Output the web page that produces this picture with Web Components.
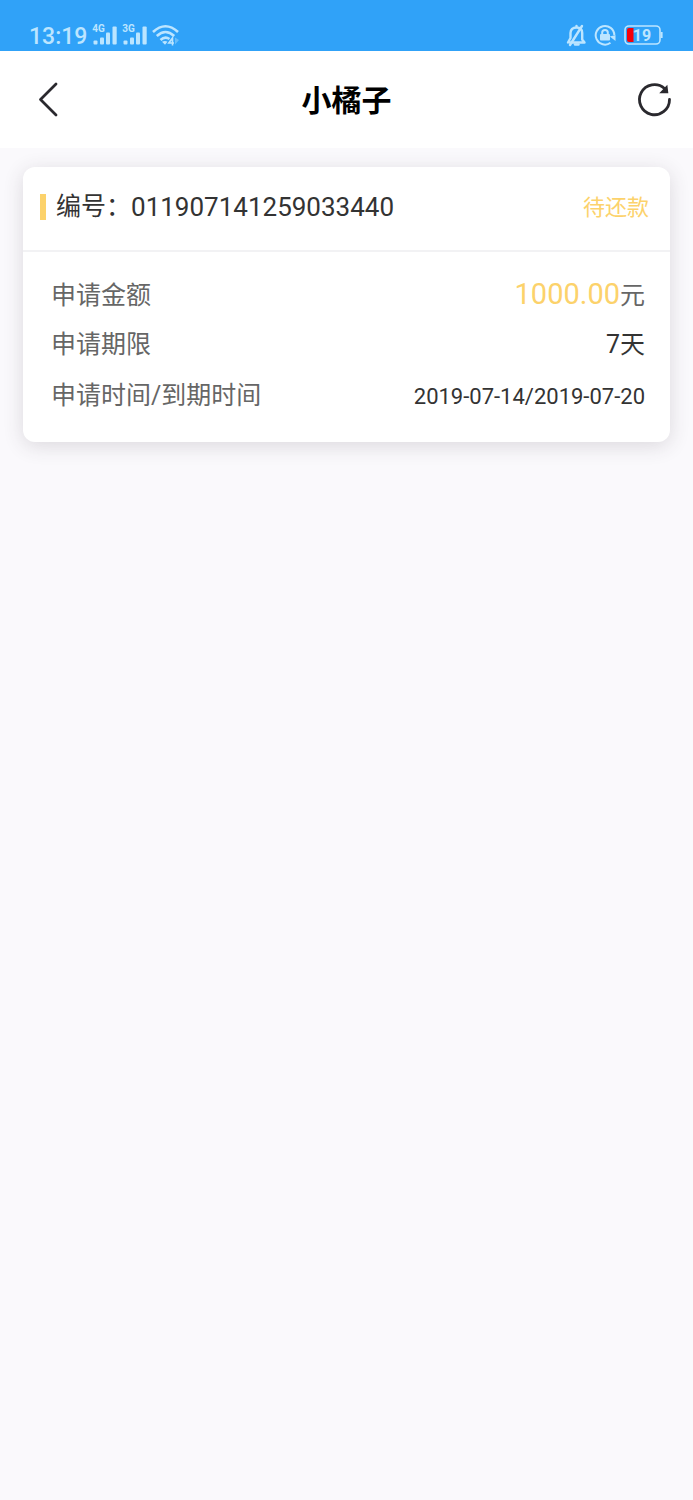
<!DOCTYPE html>
<html lang="zh-CN">
<head>
<meta charset="utf-8">
<meta name="viewport" content="width=device-width, initial-scale=1">
<title>小橘子</title>
<style>
  body {
    margin: 0;
    min-height: 100vh;
    background: #faf9fc;
    color: #333;
    font-family: Roboto, "Noto Sans CJK SC", sans-serif;
  }
</style>
</head>
<body>
<loan-page></loan-page>

<script>
const define = (name, html) => {
  const template = document.createElement('template');
  template.innerHTML = html;
  customElements.define(name, class extends HTMLElement {
    constructor() {
      super();
      this.attachShadow({ mode: 'open' }).append(template.content.cloneNode(true));
    }
  });
};

/* Mobile signal bars with the network generation above them */
define('signal-bars', `
  <style>
    :host { display: block; position: relative; width: 25px; height: 24px; }
    svg { display: block; }
    span { position: absolute; left: 0; top: 0; font-size: 10px; line-height: 12px; font-weight: 700; }
  </style>
  <svg width="25" height="24" viewBox="0 0 25 24" fill="currentColor" aria-hidden="true">
    <rect x="1.5" y="17.5" width="4" height="4" rx="1"/>
    <rect x="8" y="14.5" width="4" height="7" rx="1"/>
    <rect x="14" y="9.5" width="4" height="12" rx="1"/>
    <rect x="20.5" y="3.5" width="4.2" height="18" rx="1"/>
  </svg>
  <span><slot></slot></span>`);

define('battery-level', `
  <style>
    :host { display: block; position: relative; width: 39px; height: 20px; }
    svg { display: block; }
    span { position: absolute; inset: 1px 3px 0 0; text-align: center; font-size: 16px; line-height: 20px; font-weight: 700; }
  </style>
  <svg width="39" height="20" viewBox="0 0 39 20" fill="none" aria-hidden="true">
    <path d="M5 3H9.500V17H5Q3 17 3 15V5Q3 3 5 3Z" fill="#f80008"/>
    <rect x="1" y="1" width="35" height="18" rx="4" stroke="currentColor" stroke-width="1.6"/>
    <path d="M37.6 7V13" stroke="currentColor" stroke-width="2"/>
  </svg>
  <span><slot></slot></span>`);

define('status-bar', `
  <style>
    :host {
      display: flex; justify-content: space-between; align-items: flex-end;
      box-sizing: border-box; height: 51px; padding: 0 30px 2px 29px;
      background: #30a2f8; color: #bce5ff;
    }
    div { display: flex; align-items: center; height: 28px; }
    .left { gap: 5px; }
    .right { gap: 8px; }
    time { padding-top: 3px; font-size: 23px; line-height: 25px; font-weight: 500; }
    svg { display: block; }
  </style>
  <div class="left">
    <time>13:19</time>
    <signal-bars>4G</signal-bars>
    <signal-bars>3G</signal-bars>
    <svg width="28" height="24" viewBox="0 0 28 24" fill="none" stroke="currentColor" stroke-width="2.6" aria-label="Wi-Fi" role="img">
      <path d="M1 9Q13.5 -2.5 26 9"/>
      <path d="M4.800 13Q13.500 5 22.200 13"/>
      <path d="M8.500 17Q13 12.800 17.500 16"/>
      <path d="M10 18.800Q13 17 15.500 18.800L13 21.800Z" fill="currentColor" stroke="none"/>
      <path d="M20.500 22.500V15L16.800 20H22" stroke-width="1.600"/>
      <path d="M23 14.500V21.500L27 17Z" fill="currentColor" stroke="none" opacity=".4"/>
    </svg>
  </div>
  <div class="right">
    <svg width="20" height="24" viewBox="0 0 20 24" fill="none" stroke="currentColor" stroke-width="2.4" stroke-linecap="round" stroke-linejoin="round" aria-label="静音" role="img">
      <path d="M4 19.500H18.500L16.200 16.500V10Q16.200 4.500 10.500 4.500T4.500 10V15L2 19.500M10.500 3V4.500"/>
      <path d="M9 21.500H12.500"/>
      <path d="M4 22L16 3"/>
    </svg>
    <svg width="22" height="24" viewBox="0 0 22 24" fill="none" stroke="currentColor" stroke-width="2" aria-label="方向锁定" role="img">
      <path d="M16.500 19.800A9.300 9.300 0 1 1 20.300 12"/>
      <path d="M15.800 13.500L21.500 12V18Z" fill="currentColor" stroke="none"/>
      <rect x="6" y="11" width="10" height="6.500" rx="1" fill="currentColor" stroke="none"/>
      <path d="M8.200 11.500V9.500Q8.200 7 11 7T13.800 9.500V11.500"/>
    </svg>
    <battery-level>19</battery-level>
  </div>`);

define('nav-bar', `
  <style>
    :host {
      display: grid; grid-template-columns: 66px 1fr 66px; align-items: center;
      height: 97px; box-sizing: border-box; padding: 1px 15px 0; background: #fff;
    }
    h1 { margin: 0; padding-top: 2px; text-align: center; font-size: 30px; line-height: 44px; font-weight: 700; color: #000; }
    button { display: grid; place-items: center; justify-self: center; width: 48px; height: 48px; padding: 0; border: 0; background: none; color: #2a292e; }
    button:last-of-type { justify-self: end; }
    svg { display: block; }
  </style>
  <button type="button" aria-label="返回">
    <svg width="24" height="36" viewBox="0 0 24 36" fill="none" stroke="currentColor" stroke-width="2.8" stroke-linecap="round" stroke-linejoin="round">
      <path d="M20 2L4.500 17.500L20 33"/>
    </svg>
  </button>
  <h1><slot></slot></h1>
  <button type="button" aria-label="刷新">
    <svg width="36" height="36" viewBox="0 0 36 36" fill="none" stroke="currentColor" stroke-width="2.8">
      <path d="M33.5 17.5A15 15 0 1 1 28.5 6.5" stroke-linecap="round"/>
      <path d="M30.8 4.5L31.5 10.5H25Z" fill="currentColor" stroke-width="1.5"/>
    </svg>
  </button>`);

define('loan-card', `
  <style>
    :host { display: block; margin: 19px 23px 0; border-radius: 12px; background: #fff; box-shadow: 0 4px 20px rgba(60, 50, 60, .16); }
    header { display: flex; align-items: center; justify-content: space-between; height: 85px; box-sizing: border-box; padding: 0 21px 3px 17px; border-bottom: 2px solid #f2f2f4; }
    h2 { display: flex; align-items: center; margin: 0; font-size: 25px; line-height: 36px; font-weight: 400; }
    h2::before { content: ""; width: 6px; height: 26px; margin-right: 10px; background: #fcd26b; }
    .number { font-size: 26px; }
    .status { padding-top: 2px; font-size: 22px; line-height: 32px; color: #fcd26b; }
    dl { margin: 0; padding: 16px 25px 21px 28px; }
  </style>
  <header>
    <h2>编号：<span class="number"><slot name="number"></slot></span></h2>
    <span class="status"><slot name="status"></slot></span>
  </header>
  <dl><slot></slot></dl>`);

define('loan-field', `
  <style>
    :host { display: flex; justify-content: space-between; align-items: baseline; box-sizing: border-box; height: 51px; padding-top: 8px; }
    dt { font-size: 25px; line-height: 36px; color: #666; }
    dd { margin: 0; font-size: 25px; line-height: 36px; }
    :host([small]) dd { font-size: 22px; }
  </style>
  <dt><slot name="label"></slot></dt>
  <dd><slot></slot></dd>`);

define('money-amount', `
  <style>
    :host { color: #666; }
    span { font-size: 29px; color: #fcd26b; }
  </style>
  <span><slot></slot></span>元`);

define('loan-page', `
  <style>:host { display: block; }</style>
  <status-bar></status-bar>
  <nav-bar>小橘子</nav-bar>
  <main>
    <loan-card>
      <span slot="number">011907141259033440</span>
      <span slot="status">待还款</span>
      <loan-field><span slot="label">申请金额</span><money-amount>1000.00</money-amount></loan-field>
      <loan-field><span slot="label">申请期限</span>7天</loan-field>
      <loan-field small><span slot="label">申请时间/到期时间</span>2019-07-14/2019-07-20</loan-field>
    </loan-card>
  </main>`);
</script>
</body>
</html>
